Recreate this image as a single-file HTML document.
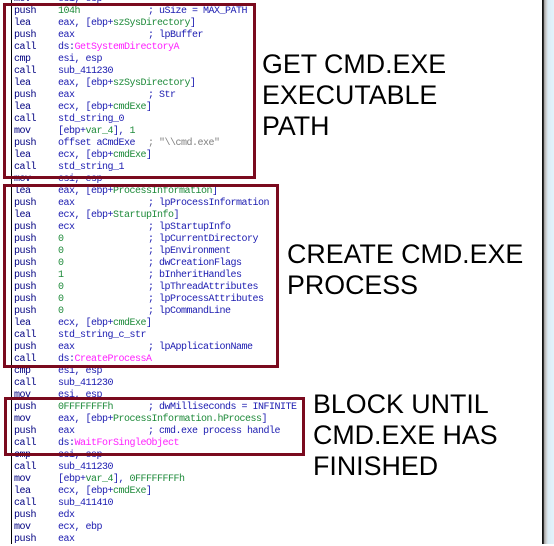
<!DOCTYPE html>
<html><head><meta charset="utf-8"><style>
html,body{margin:0;padding:0}
body{width:554px;height:544px;overflow:hidden;background:#fff;position:relative;font-family:"Liberation Mono",monospace;}
.l{position:absolute;left:14px;height:12px;line-height:12px;font-size:10px;letter-spacing:-0.5px;white-space:pre;color:#000080}
.o{position:absolute;left:44px;color:#1b1bb0}
.c{position:absolute;left:134px;color:#1b1bb0}
.g{color:#1e8a3a}.m{color:#ff20ff}.s{color:#808080}
.box{position:absolute;border:3px solid #7a0a1e;box-sizing:border-box}
.big{position:absolute;font-family:"Liberation Sans",sans-serif;font-size:26.8px;line-height:31px;color:#000;white-space:pre}
#vl{position:absolute;left:11px;top:0;width:1px;height:544px;background:#000}
#rb{position:absolute;left:542px;top:0;width:12px;height:544px;background:linear-gradient(90deg,#111 0,#111 1.5px,#999 2px,#ccc 4px,#dcecf5 6px,#e2f2fb 100%)}
</style></head><body>
<div id="vl"></div>
<div class="l" style="top:-6px">mov<span class="o">esi, esp</span></div>
<div class="l" style="top:6px">push<span class="o"><span class="g">104h</span></span><span class="c">; uSize = MAX_PATH</span></div>
<div class="l" style="top:18px">lea<span class="o">eax, [ebp+<span class="g">szSysDirectory</span>]</span></div>
<div class="l" style="top:30px">push<span class="o">eax</span><span class="c">; lpBuffer</span></div>
<div class="l" style="top:42px">call<span class="o">ds:<span class="m">GetSystemDirectoryA</span></span></div>
<div class="l" style="top:54px">cmp<span class="o">esi, esp</span></div>
<div class="l" style="top:66px">call<span class="o">sub_411230</span></div>
<div class="l" style="top:78px">lea<span class="o">eax, [ebp+<span class="g">szSysDirectory</span>]</span></div>
<div class="l" style="top:90px">push<span class="o">eax</span><span class="c">; Str</span></div>
<div class="l" style="top:102px">lea<span class="o">ecx, [ebp+<span class="g">cmdExe</span>]</span></div>
<div class="l" style="top:114px">call<span class="o">std_string_0</span></div>
<div class="l" style="top:126px">mov<span class="o">[ebp+<span class="g">var_4</span>], <span class="g">1</span></span></div>
<div class="l" style="top:138px">push<span class="o">offset aCmdExe</span><span class="c s">; "\\cmd.exe"</span></div>
<div class="l" style="top:150px">lea<span class="o">ecx, [ebp+<span class="g">cmdExe</span>]</span></div>
<div class="l" style="top:162px">call<span class="o">std_string_1</span></div>
<div class="l" style="top:174px">mov<span class="o">esi, esp</span></div>
<div class="l" style="top:186px">lea<span class="o">eax, [ebp+<span class="g">ProcessInformation</span>]</span></div>
<div class="l" style="top:198px">push<span class="o">eax</span><span class="c">; lpProcessInformation</span></div>
<div class="l" style="top:210px">lea<span class="o">ecx, [ebp+<span class="g">StartupInfo</span>]</span></div>
<div class="l" style="top:222px">push<span class="o">ecx</span><span class="c">; lpStartupInfo</span></div>
<div class="l" style="top:234px">push<span class="o g">0</span><span class="c">; lpCurrentDirectory</span></div>
<div class="l" style="top:246px">push<span class="o g">0</span><span class="c">; lpEnvironment</span></div>
<div class="l" style="top:258px">push<span class="o g">0</span><span class="c">; dwCreationFlags</span></div>
<div class="l" style="top:270px">push<span class="o g">1</span><span class="c">; bInheritHandles</span></div>
<div class="l" style="top:282px">push<span class="o g">0</span><span class="c">; lpThreadAttributes</span></div>
<div class="l" style="top:294px">push<span class="o g">0</span><span class="c">; lpProcessAttributes</span></div>
<div class="l" style="top:306px">push<span class="o g">0</span><span class="c">; lpCommandLine</span></div>
<div class="l" style="top:318px">lea<span class="o">ecx, [ebp+<span class="g">cmdExe</span>]</span></div>
<div class="l" style="top:330px">call<span class="o">std_string_c_str</span></div>
<div class="l" style="top:342px">push<span class="o">eax</span><span class="c">; lpApplicationName</span></div>
<div class="l" style="top:354px">call<span class="o">ds:<span class="m">CreateProcessA</span></span></div>
<div class="l" style="top:366px">cmp<span class="o">esi, esp</span></div>
<div class="l" style="top:378px">call<span class="o">sub_411230</span></div>
<div class="l" style="top:390px">mov<span class="o">esi, esp</span></div>
<div class="l" style="top:402px">push<span class="o g">0FFFFFFFFh</span><span class="c">; dwMilliseconds = INFINITE</span></div>
<div class="l" style="top:414px">mov<span class="o">eax, [ebp+<span class="g">ProcessInformation.hProcess</span>]</span></div>
<div class="l" style="top:426px">push<span class="o">eax</span><span class="c">; cmd.exe process handle</span></div>
<div class="l" style="top:438px">call<span class="o">ds:<span class="m">WaitForSingleObject</span></span></div>
<div class="l" style="top:450px">cmp<span class="o">esi, esp</span></div>
<div class="l" style="top:462px">call<span class="o">sub_411230</span></div>
<div class="l" style="top:474px">mov<span class="o">[ebp+<span class="g">var_4</span>], <span class="g">0FFFFFFFFh</span></span></div>
<div class="l" style="top:486px">lea<span class="o">ecx, [ebp+<span class="g">cmdExe</span>]</span></div>
<div class="l" style="top:498px">call<span class="o">sub_411410</span></div>
<div class="l" style="top:510px">push<span class="o">edx</span></div>
<div class="l" style="top:522px">mov<span class="o">ecx, ebp</span></div>
<div class="l" style="top:534px">push<span class="o">eax</span></div>
<div class="box" style="left:3px;top:3px;width:253px;height:176px"></div>
<div class="box" style="left:3px;top:184px;width:276px;height:184px"></div>
<div class="box" style="left:4px;top:397px;width:301px;height:59px"></div>
<div class="big" style="left:262px;top:49px">GET CMD.EXE
EXECUTABLE
PATH</div>
<div class="big" style="left:287px;top:239px">CREATE CMD.EXE
PROCESS</div>
<div class="big" style="left:313px;top:389px">BLOCK UNTIL
CMD.EXE HAS
FINISHED</div>
<div id="rb"></div>
</body></html>
